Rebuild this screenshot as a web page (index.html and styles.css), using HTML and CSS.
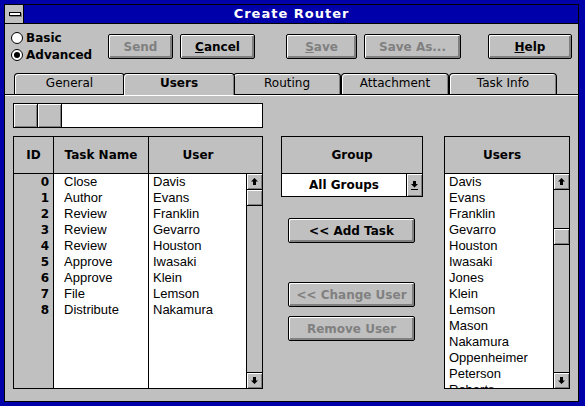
FILE: index.html
```html
<!DOCTYPE html>
<html>
<head>
<meta charset="utf-8">
<title>Create Router</title>
<link rel="stylesheet" href="styles.css">
</head>
<body>
<div class="window">
  <div class="frame">
    <div class="titlebar">
      <div class="sysmenu"><span class="dash"></span></div>
      <div class="caption">Create Router</div>
    </div>
    <div class="client">
      <div class="toprow">
        <div class="radios">
          <div class="radio"><span class="circle"></span>Basic</div>
          <div class="radio on"><span class="circle"><span class="dot"></span></span>Advanced</div>
        </div>
        <div class="btn dis b-send">Send</div>
        <div class="btn b-cancel"><span class="u">C</span>ancel</div>
        <div class="btn dis b-save"><span class="u">S</span>ave</div>
        <div class="btn dis b-saveas">Save As...</div>
        <div class="btn b-help"><span class="u">H</span>elp</div>
      </div>
      <div class="tabs">
        <div class="tab t-general">General</div>
        <div class="tab active">Users</div>
        <div class="tab">Routing</div>
        <div class="tab">Attachment</div>
        <div class="tab">Task Info</div>
      </div>
      <div class="panel">
        <div class="col-left">
          <div class="toolbar">
            <span class="tbtn"></span>
            <span class="tbtn"></span>
            <span class="tfield"></span>
          </div>
          <div class="grid">
            <div class="ghead">
              <div class="c-id">ID</div>
              <div class="c-task">Task Name</div>
              <div class="c-user head-user">User</div>
            </div>
            <div class="gbody">
              <div class="c-id ids">
                <div class="row">0</div><div class="row">1</div><div class="row">2</div>
                <div class="row">3</div><div class="row">4</div><div class="row">5</div>
                <div class="row">6</div><div class="row">7</div><div class="row">8</div>
              </div>
              <div class="c-task tasks">
                <div class="row">Close</div><div class="row">Author</div><div class="row">Review</div>
                <div class="row">Review</div><div class="row">Review</div><div class="row">Approve</div>
                <div class="row">Approve</div><div class="row">File</div><div class="row">Distribute</div>
              </div>
              <div class="c-user userscol">
                <div class="list">
                  <div class="row">Davis</div><div class="row">Evans</div><div class="row">Franklin</div>
                  <div class="row">Gevarro</div><div class="row">Houston</div><div class="row">Iwasaki</div>
                  <div class="row">Klein</div><div class="row">Lemson</div><div class="row">Nakamura</div>
                </div>
                <div class="vscroll">
                  <div class="arrow"><svg width="7" height="7" viewBox="0 0 7 7"><polygon points="3.5,0 7,3.5 5,3.5 5,7 2,7 2,3.5 0,3.5" fill="#000"/></svg></div>
                  <div class="thumb"></div>
                  <div class="arrow down"><svg width="7" height="7" viewBox="0 0 7 7"><polygon points="2,0 5,0 5,3.5 7,3.5 3.5,7 0,3.5 2,3.5" fill="#000"/></svg></div>
                </div>
              </div>
            </div>
          </div>
        </div>
        <div class="col-mid">
          <div class="groupbox">
            <div class="bhead">Group</div>
            <div class="combo">
              <div class="ctext">All Groups</div>
              <div class="cbtn"><svg width="7" height="9" viewBox="0 0 7 9"><polygon points="2,0 5,0 5,3 7,3 3.5,6.5 0,3 2,3" fill="#000"/><rect x="0" y="8" width="7" height="1" fill="#000"/></svg></div>
            </div>
          </div>
          <div class="btn mbtn b-add">&lt;&lt; Add Task</div>
          <div class="btn mbtn dis b-change">&lt;&lt; Change User</div>
          <div class="btn mbtn dis b-remove">Remove User</div>
        </div>
        <div class="col-right">
          <div class="usersbox">
            <div class="bhead uhead">Users</div>
            <div class="ubody">
              <div class="list ulist">
                <div class="row">Davis</div><div class="row">Evans</div><div class="row">Franklin</div>
                <div class="row">Gevarro</div><div class="row">Houston</div><div class="row">Iwasaki</div>
                <div class="row">Jones</div><div class="row">Klein</div><div class="row">Lemson</div>
                <div class="row">Mason</div><div class="row">Nakamura</div><div class="row">Oppenheimer</div>
                <div class="row">Peterson</div><div class="row">Roberts</div>
              </div>
              <div class="vscroll">
                <div class="arrow"><svg width="7" height="7" viewBox="0 0 7 7"><polygon points="3.5,0 7,3.5 5,3.5 5,7 2,7 2,3.5 0,3.5" fill="#000"/></svg></div>
                <div class="thumb uthumb"></div>
                <div class="arrow down"><svg width="7" height="7" viewBox="0 0 7 7"><polygon points="2,0 5,0 5,3.5 7,3.5 3.5,7 0,3.5 2,3.5" fill="#000"/></svg></div>
              </div>
            </div>
          </div>
        </div>
      </div>
    </div>
  </div>
</div>
</body>
</html>
```

FILE: styles.css
```css
* { box-sizing: border-box; }
html, body { margin: 0; padding: 0; }
body {
  width: 585px;
  height: 406px;
  overflow: hidden;
  font-family: "DejaVu Sans", sans-serif;
  font-size: 12px;
  color: #000;
}
.window {
  width: 585px;
  height: 406px;
  background: #0000aa;
  padding: 4px 6px 4px 4px;
}
.frame {
  height: 398px;
  border: 1px solid #000;
  display: flex;
  flex-direction: column;
}
.titlebar {
  height: 19px;
  border-bottom: 1px solid #000;
  display: flex;
  background: #0000aa;
}
.sysmenu {
  width: 19px;
  border-right: 1px solid #000;
  background: #c0c0c0;
  display: flex;
  align-items: center;
  padding-left: 4px;
}
.dash {
  display: block;
  width: 12px;
  height: 4px;
  border: 1px solid #000;
  background: #fff;
  box-shadow: 1px 1px 0 #808080;
}
.caption {
  flex: 1;
  color: #fff;
  text-align: center;
  font-weight: bold;
  font-size: 13px;
  letter-spacing: 1px;
  line-height: 18px;
  padding-right: 19px;
}
.client {
  flex: 1;
  background: #c0c0c0;
  display: flex;
  flex-direction: column;
}
.toprow {
  height: 49px;
  display: flex;
  align-items: flex-start;
  padding-left: 6px;
}
.radios {
  width: 97px;
  margin-top: 5px;
  font-weight: bold;
  font-size: 12px;
}
.radio {
  height: 17px;
  display: flex;
  align-items: center;
}
.circle {
  width: 12px;
  height: 12px;
  border: 1px solid #000;
  border-radius: 50%;
  background: #fff;
  margin-right: 3px;
  display: flex;
  align-items: center;
  justify-content: center;
}
.dot {
  width: 6px;
  height: 6px;
  border-radius: 50%;
  background: #000;
}
.btn {
  height: 25px;
  border: 1px solid #000;
  border-radius: 2px;
  background: #c0c0c0;
  box-shadow: inset 1px 1px 0 #fff, inset -2px -2px 0 #808080;
  display: flex;
  align-items: center;
  justify-content: center;
  font-weight: bold;
  font-size: 12px;
  white-space: nowrap;
}
.toprow .btn { margin-top: 10px; }
.btn.dis { color: #808080; }
.u { text-decoration: underline; }
.b-send { width: 65px; }
.b-cancel { width: 75px; margin-left: 7px; }
.b-save { width: 71px; margin-left: 31px; }
.b-saveas { width: 97px; margin-left: 7px; }
.b-help { width: 84px; margin-left: 27px; }

.tabs {
  height: 22px;
  border-bottom: 1px solid #000;
  display: flex;
  align-items: flex-start;
  padding-left: 9px;
}
.tab {
  width: 108px;
  height: 21px;
  border: 1px solid #000;
  border-bottom: none;
  border-radius: 4px 4px 0 0;
  box-shadow: inset 1px 1px 0 #fff, inset -1px 0 0 #808080;
  background: #c0c0c0;
  text-align: center;
  line-height: 19px;
  font-size: 12px;
}
.t-general { width: 111px; }
.tab.active {
  width: 112px;
  height: 22px;
  margin: 0 -2px -1px -2px;
  position: relative;
  z-index: 1;
  font-weight: bold;
}
.panel {
  flex: 1;
  border-top: 1px solid #fff;
  display: flex;
  align-items: flex-start;
  padding: 7px 8px 0 8px;
}
.col-left { width: 250px; }
.toolbar {
  height: 25px;
  border: 1px solid #000;
  display: flex;
}
.tbtn {
  width: 24px;
  border-right: 1px solid #000;
  background: #c0c0c0;
  box-shadow: inset 1px 1px 0 #fff, inset -1px -1px 0 #808080;
}
.tfield { flex: 1; background: #fff; }

.grid {
  margin-top: 8px;
  height: 253px;
  border: 1px solid #000;
  display: flex;
  flex-direction: column;
}
.ghead {
  height: 37px;
  border-bottom: 1px solid #000;
  display: flex;
  font-weight: bold;
  font-size: 12px;
}
.ghead > div {
  display: flex;
  align-items: center;
  justify-content: center;
}
.c-id { width: 40px; border-right: 1px solid #000; }
.c-task { width: 95px; border-right: 1px solid #000; }
.c-user { flex: 1; }
.head-user { padding-right: 15px; }
.gbody { flex: 1; display: flex; min-height: 0; }
.ids { background: #c0c0c0; font-weight: bold; text-align: right; padding-right: 4px; }
.tasks, .userscol { background: #fff; }
.row { height: 16px; line-height: 16px; white-space: nowrap; }
.tasks, .list { font-family: "Liberation Sans", Arial, sans-serif; font-size: 13px; }
.tasks { padding-left: 10px; }
.userscol { display: flex; }
.list { flex: 1; padding-left: 4px; overflow: hidden; }
.vscroll {
  width: 16px;
  border-left: 1px solid #000;
  background: #c0c0c0;
  display: flex;
  flex-direction: column;
}
.arrow {
  height: 16px;
  border-bottom: 1px solid #000;
  background: #c0c0c0;
  box-shadow: inset 1px 1px 0 #fff, inset -1px -1px 0 #808080;
  display: flex;
  align-items: center;
  justify-content: center;
}
.arrow.down {
  margin-top: auto;
  border-bottom: none;
  border-top: 1px solid #000;
}
.thumb {
  height: 16px;
  border-bottom: 1px solid #000;
  background: #c0c0c0;
  box-shadow: inset 1px 1px 0 #fff, inset -1px -1px 0 #808080;
}
.uthumb {
  margin-top: 38px;
  height: 17px;
  border-top: 1px solid #000;
}

.col-mid { width: 142px; margin-left: 18px; margin-top: 33px; }
.groupbox {
  border: 1px solid #000;
  height: 61px;
  display: flex;
  flex-direction: column;
}
.bhead {
  height: 37px;
  border-bottom: 1px solid #000;
  display: flex;
  align-items: center;
  justify-content: center;
  font-weight: bold;
  font-size: 12px;
}
.combo { flex: 1; display: flex; background: #fff; }
.ctext {
  flex: 1;
  display: flex;
  align-items: center;
  justify-content: center;
  font-weight: bold;
  font-size: 12px;
}
.cbtn {
  width: 16px;
  border-left: 1px solid #000;
  background: #c0c0c0;
  box-shadow: inset 1px 1px 0 #fff, inset -1px -1px 0 #808080;
  display: flex;
  align-items: center;
  justify-content: center;
}
.mbtn { width: 127px; margin-left: 7px; }
.b-add { margin-top: 21px; }
.b-change { margin-top: 39px; }
.b-remove { margin-top: 9px; }

.col-right { width: 126px; margin-left: 21px; margin-top: 33px; }
.usersbox {
  height: 253px;
  border: 1px solid #000;
  display: flex;
  flex-direction: column;
}
.uhead { padding-right: 10px; }
.ubody { flex: 1; display: flex; min-height: 0; background: #fff; }
```
